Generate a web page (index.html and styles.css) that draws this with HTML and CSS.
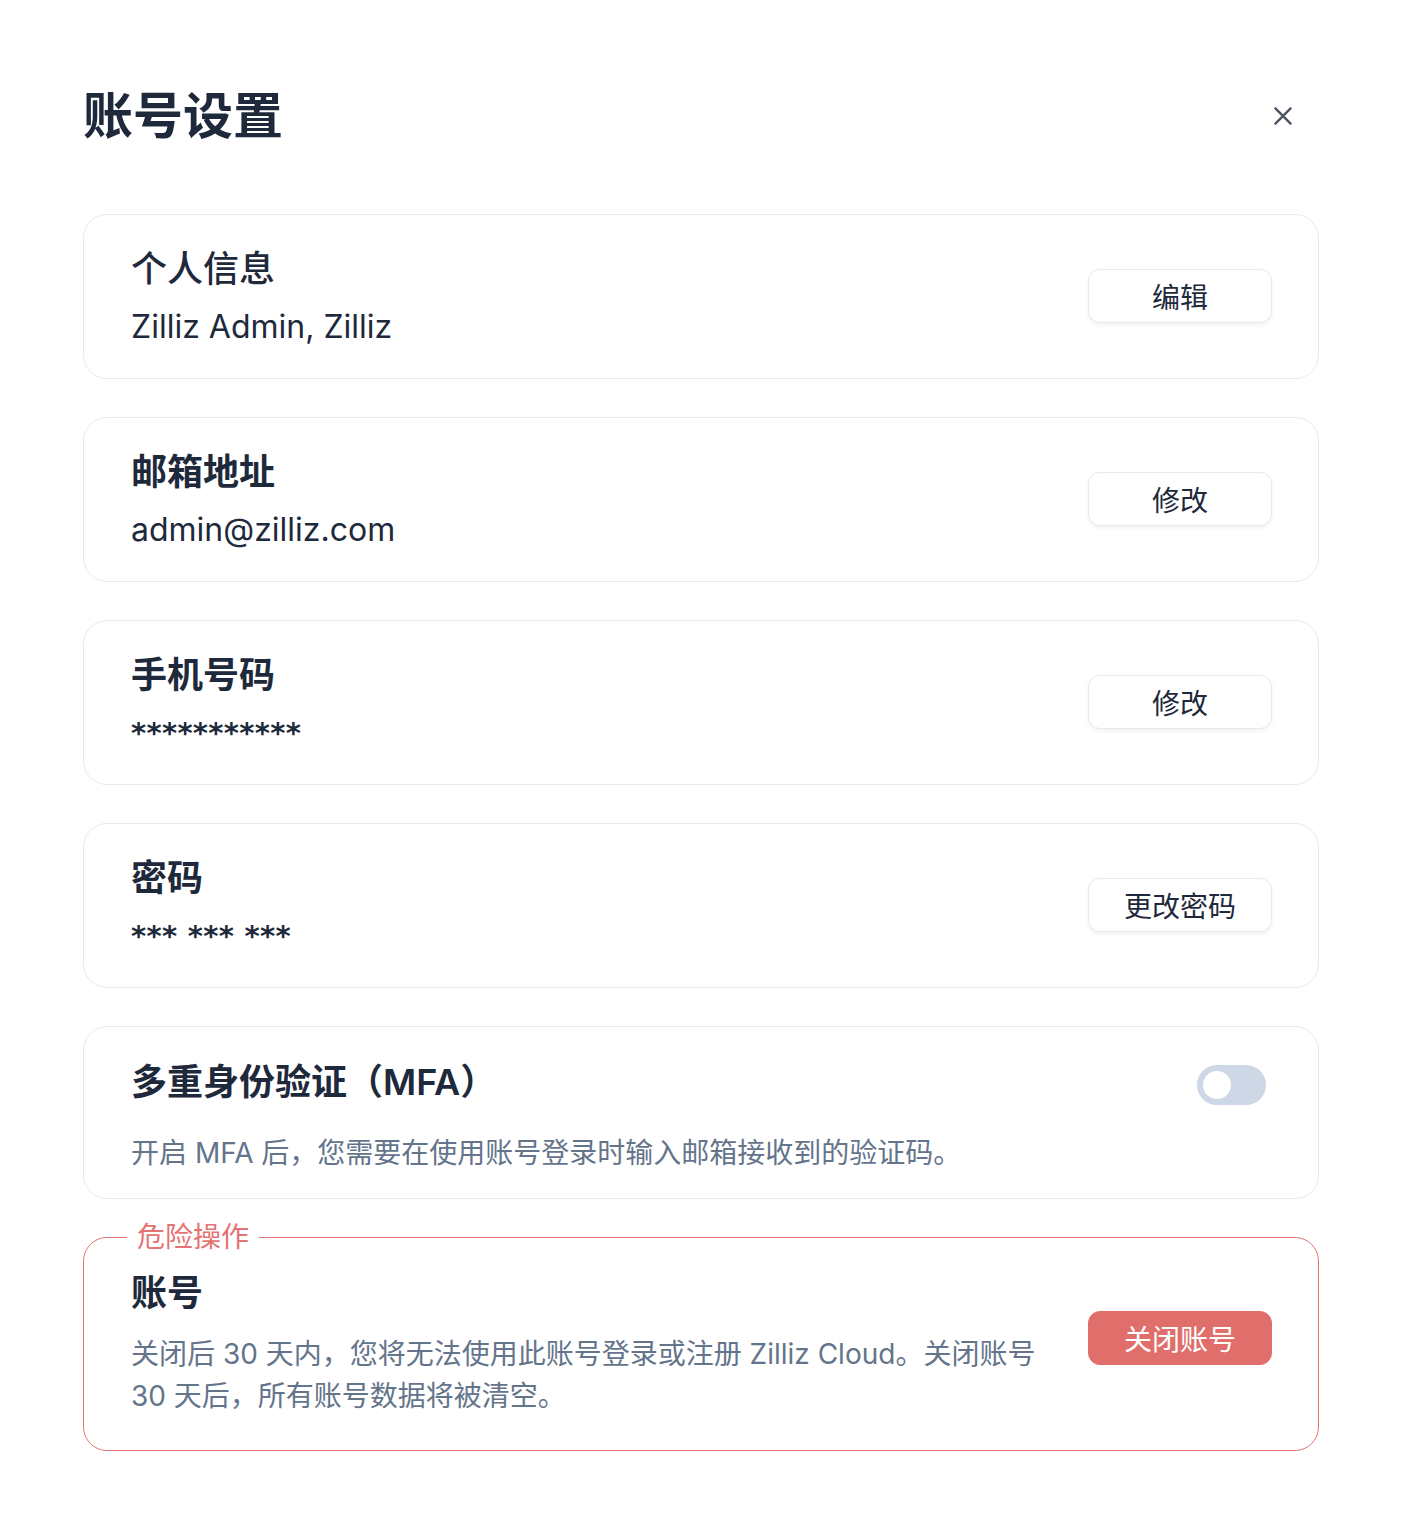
FILE: index.html
```html
<!DOCTYPE html>
<html lang="zh-CN">
<head>
  <meta charset="UTF-8">
  <title>账号设置 | Zilliz Cloud</title>
  <meta name="viewport" content="width=device-width, initial-scale=1.0">
  <link rel="stylesheet" href="styles.css">
</head>
<body>

<div class="settings">
  <div class="settings-header">
    <h1>账号设置</h1>
    <button class="close-btn" aria-label="关闭">
      <svg width="26" height="26" viewBox="0 0 24 24" fill="none" stroke="currentColor" stroke-width="2.2" stroke-linecap="round">
        <path d="M5 5L19 19M19 5L5 19"/>
      </svg>
    </button>
  </div>

  <div class="card">
    <div class="card-info">
      <div class="card-title light">个人信息</div>
      <div class="card-value">Zilliz Admin, Zilliz</div>
    </div>
    <button class="btn">编辑</button>
  </div>

  <div class="card">
    <div class="card-info">
      <div class="card-title">邮箱地址</div>
      <div class="card-value">admin@zilliz.com</div>
    </div>
    <button class="btn">修改</button>
  </div>

  <div class="card">
    <div class="card-info">
      <div class="card-title">手机号码</div>
      <div class="card-value mask">***********</div>
    </div>
    <button class="btn">修改</button>
  </div>

  <div class="card">
    <div class="card-info">
      <div class="card-title">密码</div>
      <div class="card-value mask">*** *** ***</div>
    </div>
    <button class="btn">更改密码</button>
  </div>

  <div class="card card-mfa">
    <div class="mfa-head">
      <div class="card-title">多重身份验证（MFA）</div>
      <label class="switch">
        <input type="checkbox">
        <span class="slider"></span>
      </label>
    </div>
    <div class="card-desc">开启 MFA 后，您需要在使用账号登录时输入邮箱接收到的验证码。</div>
  </div>

  <fieldset class="danger">
    <legend>危险操作</legend>
    <div class="danger-row">
      <div class="card-info">
        <div class="card-title">账号</div>
        <div class="card-desc danger-desc">关闭后 30 天内，您将无法使用此账号登录或注册 Zilliz Cloud。关闭账号 30 天后，所有账号数据将被清空。</div>
      </div>
      <button class="btn btn-danger">关闭账号</button>
    </div>
  </fieldset>
</div>

</body>
</html>
```

FILE: styles.css
```css
body {
  margin: 0;
  background: #fff;
  font-family: 'Inter', 'Noto Sans CJK SC', sans-serif;
  color: #1e293b;
}

.settings {
  width: 1236px;
  padding: 84px 0 80px 83px;
}

.settings-header {
  display: flex;
  justify-content: space-between;
  align-items: center;
  margin-bottom: 66px;
}

.settings-header h1 {
  margin: 0;
  font-size: 50px;
  line-height: 64px;
  font-weight: 700;
  color: #1e293b;
}

.close-btn {
  background: none;
  border: none;
  padding: 0;
  margin-right: 23px;
  color: #4b5563;
  cursor: pointer;
  display: flex;
}

.card {
  display: flex;
  justify-content: space-between;
  align-items: center;
  border: 1.5px solid #e6eaf0;
  border-radius: 24px;
  padding: 30px 46px 31px 47px;
  margin-bottom: 38px;
}

.card-title {
  font-size: 36px;
  line-height: 48px;
  font-weight: 600;
  color: #1e293b;
}

.card-title.light {
  font-weight: 500;
}

.card-value {
  margin-top: 14px;
  font-size: 32px;
  line-height: 40px;
  color: #1e293b;
}

.card-value.mask {
  font-family: 'DejaVu Sans', sans-serif;
  font-size: 29px;
  font-weight: 600;
  letter-spacing: 0.3px;
}

.btn {
  width: 184px;
  height: 54px;
  background: #fff;
  border: 1.5px solid #e6eaf0;
  border-radius: 12px;
  box-shadow: 0 2px 4px rgba(15, 23, 42, 0.06);
  font-family: inherit;
  font-size: 28px;
  color: #1e293b;
  cursor: pointer;
  flex-shrink: 0;
}

.card-mfa {
  display: block;
  padding-top: 31px;
  padding-bottom: 24px;
  margin-bottom: 18px;
}

.mfa-head {
  display: flex;
  justify-content: space-between;
  align-items: center;
}

.card-desc {
  margin-top: 26px;
  font-size: 28px;
  line-height: 42px;
  color: #64748b;
}

.switch {
  position: relative;
  width: 69px;
  height: 40px;
  margin: 6px 6px 0 0;
  display: inline-block;
}

.switch input {
  display: none;
}

.slider {
  position: absolute;
  inset: 0;
  background: #cdd7e5;
  border-radius: 20px;
}

.slider::before {
  content: "";
  position: absolute;
  left: 6px;
  top: 6px;
  width: 28px;
  height: 28px;
  background: #fff;
  border-radius: 50%;
}

.danger {
  border: 1.5px solid #e57373;
  border-radius: 24px;
  margin: 0;
  padding: 12px 46px 33px 47px;
}

.danger legend {
  font-size: 28px;
  line-height: 40px;
  color: #e57373;
  padding: 0 10px;
  margin-left: -4px;
}

.danger-row {
  display: flex;
  justify-content: space-between;
  align-items: center;
}

.danger-desc {
  margin-top: 16px;
  max-width: 910px;
}

.btn-danger {
  background: #e06f6b;
  border-color: #e06f6b;
  color: #fff;
  box-shadow: none;
  margin-bottom: 10px;
}
```
